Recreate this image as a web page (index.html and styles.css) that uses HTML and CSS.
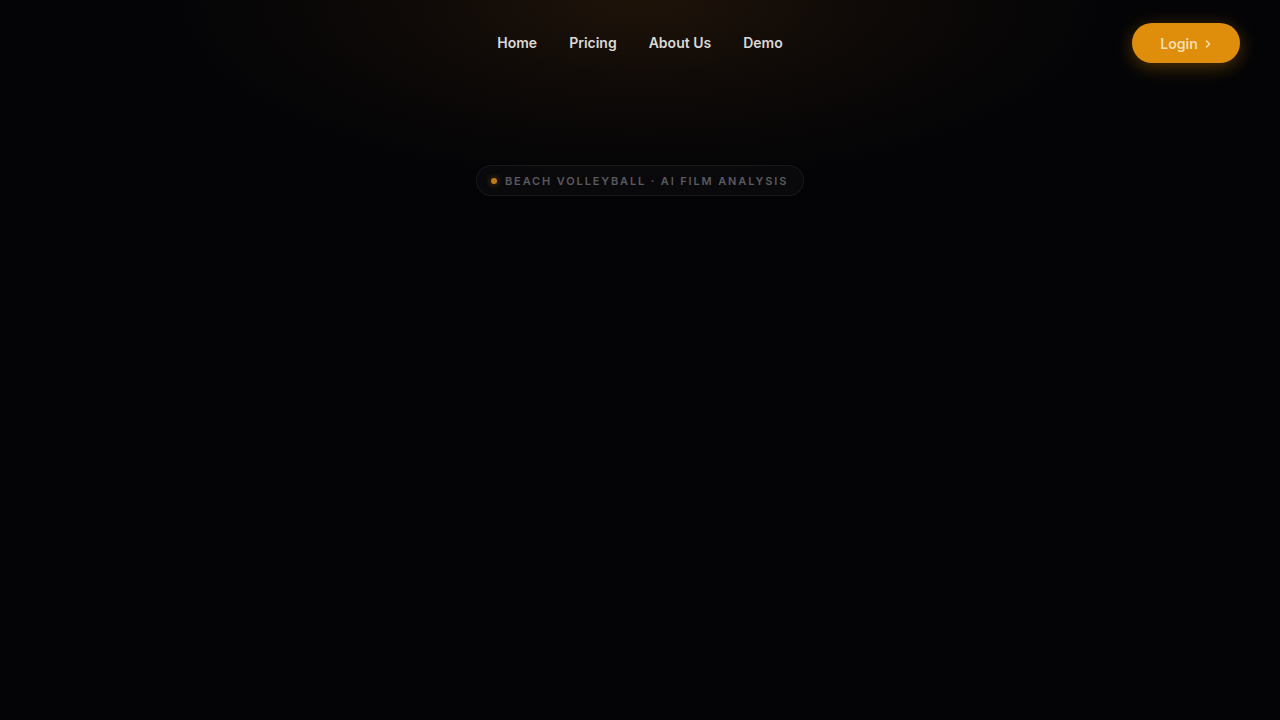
FILE: index.html
```html
<!DOCTYPE html>
<html lang="en">
<head>
<meta charset="utf-8">
<title>Beach Volleyball AI Film Analysis</title>
<link rel="stylesheet" href="styles.css">
</head>
<body>
<div class="page">
  <div class="glow"></div>
  <header class="header">
    <div class="spacer"></div>
    <nav class="nav">
      <a class="nav-link" href="#">Home</a>
      <a class="nav-link" href="#">Pricing</a>
      <a class="nav-link" href="#">About Us</a>
      <a class="nav-link" href="#">Demo</a>
    </nav>
    <div class="actions">
      <a class="login" href="#">Login <svg class="chev" width="8" height="10" viewBox="0 0 8 10"><path d="M2.5 2 L5.5 5 L2.5 8" fill="none" stroke="currentColor" stroke-width="1.6" stroke-linecap="round" stroke-linejoin="round"/></svg></a>
    </div>
  </header>
  <main class="hero">
    <div class="badge"><span class="dot"></span><span class="badge-text">Beach Volleyball · AI Film Analysis</span></div>
  </main>
</div>
</body>
</html>
```
FILE: styles.css
```css
* { box-sizing: border-box; }
html, body { margin: 0; padding: 0; }
body {
  background: #040406;
  font-family: Inter, "Noto Sans", sans-serif;
  color: #d9d5d1;
  width: 1280px;
  height: 720px;
  overflow: hidden;
}
.page {
  position: relative;
  width: 1280px;
  height: 720px;
  background: #040406;
}
.glow {
  position: absolute;
  left: 0;
  top: 0;
  width: 1280px;
  height: 280px;
  background: radial-gradient(ellipse 460px 180px at 640px 0px, rgba(125, 72, 20, 0.22) 0%, rgba(85, 48, 15, 0.13) 50%, rgba(4, 4, 6, 0) 100%);
  pointer-events: none;
}
.header {
  position: relative;
  display: grid;
  grid-template-columns: 1fr auto 1fr;
  align-items: center;
  padding: 23px 40px 0 40px;
  height: 63px;
}
.nav {
  display: flex;
  gap: 32px;
  align-items: center;
}
.nav-link {
  font-size: 14px;
  font-weight: 600;
  color: #dcd8d4;
  text-decoration: none;
  line-height: 40px;
}
.actions {
  display: flex;
  justify-content: flex-end;
}
.login {
  display: flex;
  align-items: center;
  gap: 6px;
  height: 40px;
  width: 108px;
  justify-content: center;
  border-radius: 20px;
  background: #de8e0b;
  color: #f6dcb0;
  font-size: 14px;
  font-weight: 600;
  text-decoration: none;
  box-shadow: 0 4px 18px rgba(222, 142, 11, 0.35);
}
.chev { display: block; margin-top: 1px; }
.hero {
  position: relative;
  display: flex;
  justify-content: center;
  padding-top: 102px;
}
.badge {
  display: flex;
  align-items: center;
  gap: 8px;
  height: 31px;
  width: 328px;
  padding: 0 14px;
  border-radius: 16px;
  border: 1px solid rgba(255, 255, 255, 0.06);
  background: rgba(255, 255, 255, 0.025);
}
.dot {
  width: 6px;
  height: 6px;
  border-radius: 50%;
  background: #c07a12;
  box-shadow: 0 0 6px rgba(200, 125, 20, 0.6);
  flex: none;
}
.badge-text {
  font-size: 11px;
  font-weight: 600;
  letter-spacing: 0.17em;
  text-transform: uppercase;
  color: #5a5a60;
  white-space: nowrap;
}
```
